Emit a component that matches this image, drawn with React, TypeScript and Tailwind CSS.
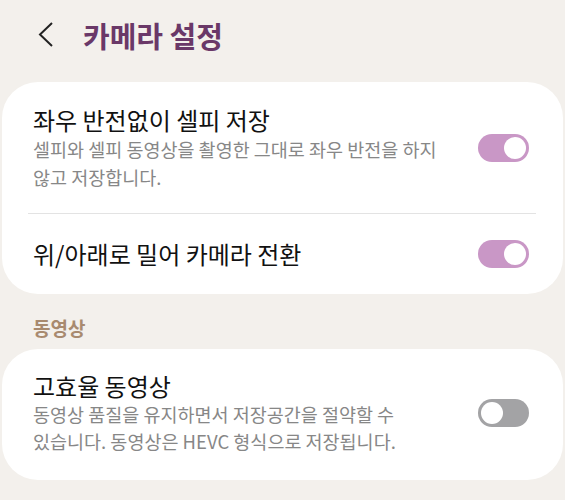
import React from "react";

const font = { fontFamily: '"Noto Sans CJK KR", "Noto Sans", sans-serif' };

function Toggle({ on }: { on: boolean }) {
  return on ? (
    <div className="w-[51px] h-[28px] rounded-full bg-[#c997c6] flex items-center justify-end pr-[3px] shrink-0">
      <div className="w-[22px] h-[22px] rounded-full bg-white" />
    </div>
  ) : (
    <div className="w-[51px] h-[28px] rounded-full bg-[#a3a3a5] flex items-center justify-start pl-[3px] shrink-0">
      <div className="w-[22px] h-[22px] rounded-full bg-white" />
    </div>
  );
}

export default function App() {
  return (
    <div className="w-[565px] h-[500px] bg-[#f3f0ec] overflow-hidden" style={font}>
      <div className="h-[68px] flex items-center pl-[38px] pt-[1px]">
        <svg width="15" height="25" viewBox="0 0 15 25" className="shrink-0">
          <polyline points="14,1 2,12.5 14,24" fill="none" stroke="#222" strokeWidth="2" strokeLinejoin="miter" />
        </svg>
        <div className="ml-[30px] text-[29px] leading-[34px] font-bold text-[#6a3868]">카메라 설정</div>
      </div>
      <div className="mt-[14px] mx-[2px] bg-white rounded-[36px]">
        <div className="flex items-center pl-[31px] pr-[34px] pt-[23px] pb-[22px]">
          <div className="flex-1">
            <div className="text-[24px] leading-[30px] text-[#111]">좌우 반전없이 셀피 저장</div>
            <div className="text-[18.5px] leading-[28px] text-[#878787]">
              셀피와 셀피 동영상을 촬영한 그대로 좌우 반전을 하지
              <br />
              않고 저장합니다.
            </div>
          </div>
          <Toggle on />
        </div>
        <div className="ml-[26px] mr-[27px] h-[1px] bg-[#e3e3e3]" />
        <div className="h-[80px] flex items-center pl-[31px] pr-[34px]">
          <div className="flex-1 text-[24px] leading-[30px] text-[#111]">위/아래로 밀어 카메라 전환</div>
          <Toggle on />
        </div>
      </div>
      <div className="mt-[22px] mb-[9px] pl-[33px] text-[19px] leading-[24px] font-bold text-[#a88a6f]">동영상</div>
      <div className="mx-[2px] bg-white rounded-[36px]">
        <div className="flex items-center pl-[31px] pr-[34px] pt-[22px] pb-[25px]">
          <div className="flex-1">
            <div className="text-[24px] leading-[30px] text-[#111]">고효율 동영상</div>
            <div className="text-[18.5px] leading-[27px] text-[#878787]">
              동영상 품질을 유지하면서 저장공간을 절약할 수
              <br />
              있습니다. 동영상은 HEVC 형식으로 저장됩니다.
            </div>
          </div>
          <Toggle on={false} />
        </div>
      </div>
    </div>
  );
}
